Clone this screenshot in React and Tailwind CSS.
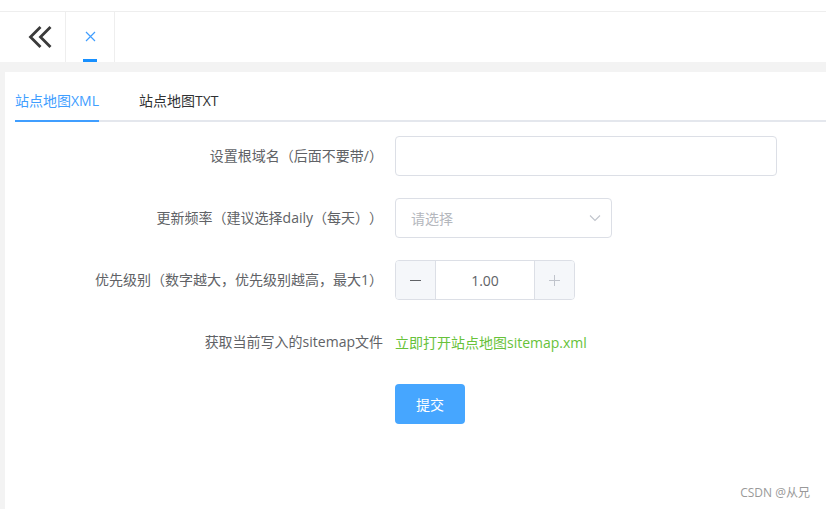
import React from 'react';

function DoubleLeft() {
  return (
    <svg width="24" height="22" viewBox="0 0 24 22" fill="none" stroke="#3a3a3a" strokeWidth="2.8" strokeLinecap="square">
      <path d="M11.5 2 L2.5 11 L11.5 20" />
      <path d="M21.5 2 L12.5 11 L21.5 20" />
    </svg>
  );
}

function Close() {
  return (
    <svg width="11" height="11" viewBox="0 0 11 11" fill="none" stroke="#409eff" strokeWidth="1.2">
      <path d="M1 1 L10 10 M10 1 L1 10" />
    </svg>
  );
}

function ChevronDown() {
  return (
    <svg width="12" height="8" viewBox="0 0 12 8" fill="none" stroke="#c0c4cc" strokeWidth="1.1">
      <path d="M1 1.5 L6 6.5 L11 1.5" />
    </svg>
  );
}

function FormRow({ label, children }) {
  return (
    <div className="flex mb-[22px]">
      <div className="w-[380px] shrink-0 pr-[12px] text-right text-[14px] leading-[40px] text-[#606266] whitespace-nowrap">{label}</div>
      <div className="flex items-center min-h-[40px]">{children}</div>
    </div>
  );
}

export default function App() {
  return (
    <div className="relative w-[826px] h-[509px] overflow-hidden bg-[#f3f3f3] [text-spacing-trim:space-all] font-['Open_Sans','Noto_Sans_CJK_SC',sans-serif]">
      {/* top strip */}
      <div className="h-[12px] bg-white border-b border-[#eeeeee]" />

      {/* tag bar */}
      <div className="flex h-[50px] bg-white">
        <div className="w-[66px] flex items-center pl-[28px] border-r border-[#eeeeee]">
          <DoubleLeft />
        </div>
        <div className="relative w-[49px] flex items-center justify-center border-r border-[#eeeeee] pb-[2px]">
          <Close />
          <div className="absolute bottom-0 left-[17px] w-[14px] h-[3px] bg-[#1890ff]" />
        </div>
      </div>

      {/* content */}
      <div className="pt-[10px] pl-[5px] h-[447px]">
        <div className="bg-white h-full pt-[9px] pl-[10px]">
          {/* tabs */}
          <div className="flex border-b-2 border-[#e4e7ed] h-[41px]">
            <div className="relative pr-[20px] text-[14px] leading-[40px] text-[#409eff]">
              站点地图XML
              <div className="absolute left-0 right-[20px] bottom-[-2px] h-[2px] bg-[#409eff]" />
            </div>
            <div className="px-[20px] text-[14px] leading-[40px] text-[#303133]">站点地图TXT</div>
          </div>

          <div className="pt-[14px]">
            <FormRow label="设置根域名（后面不要带/）">
              <div className="w-[382px] h-[40px] rounded-[4px] border border-[#dcdfe6] bg-white" />
            </FormRow>

            <FormRow label="更新频率（建议选择daily（每天））">
              <div className="w-[217px] h-[40px] rounded-[4px] border border-[#dcdfe6] bg-white flex items-center justify-between pl-[15px] pr-[10px]">
                <span className="text-[14px] text-[#b4b7bd]">请选择</span>
                <ChevronDown />
              </div>
            </FormRow>

            <FormRow label="优先级别（数字越大，优先级别越高，最大1）">
              <div className="w-[180px] h-[40px] rounded-[4px] border border-[#dcdfe6] bg-white flex overflow-hidden">
                <div className="w-[40px] bg-[#f5f7fa] border-r border-[#dcdfe6] flex items-center justify-center">
                  <div className="w-[11px] h-[1px] bg-[#606266]" />
                </div>
                <div className="flex-1 flex items-center justify-center text-[14px] text-[#606266]">1.00</div>
                <div className="w-[40px] bg-[#f5f7fa] border-l border-[#dcdfe6] flex items-center justify-center relative">
                  <div className="w-[11px] h-[1px] bg-[#c0c4cc]" />
                  <div className="absolute w-[1px] h-[11px] bg-[#c0c4cc]" />
                </div>
              </div>
            </FormRow>

            <FormRow label="获取当前写入的sitemap文件">
              <span className="text-[14px] text-[#67c23a]">立即打开站点地图sitemap.xml</span>
            </FormRow>

            <FormRow label="">
              <button className="w-[70px] h-[40px] rounded-[4px] bg-[#46a6ff] text-white text-[14px]">提交</button>
            </FormRow>
          </div>
        </div>
      </div>

      <div className="absolute right-[16px] bottom-[9px] text-[12px] leading-[14px] text-[#999999]">CSDN @从兄</div>
    </div>
  );
}
